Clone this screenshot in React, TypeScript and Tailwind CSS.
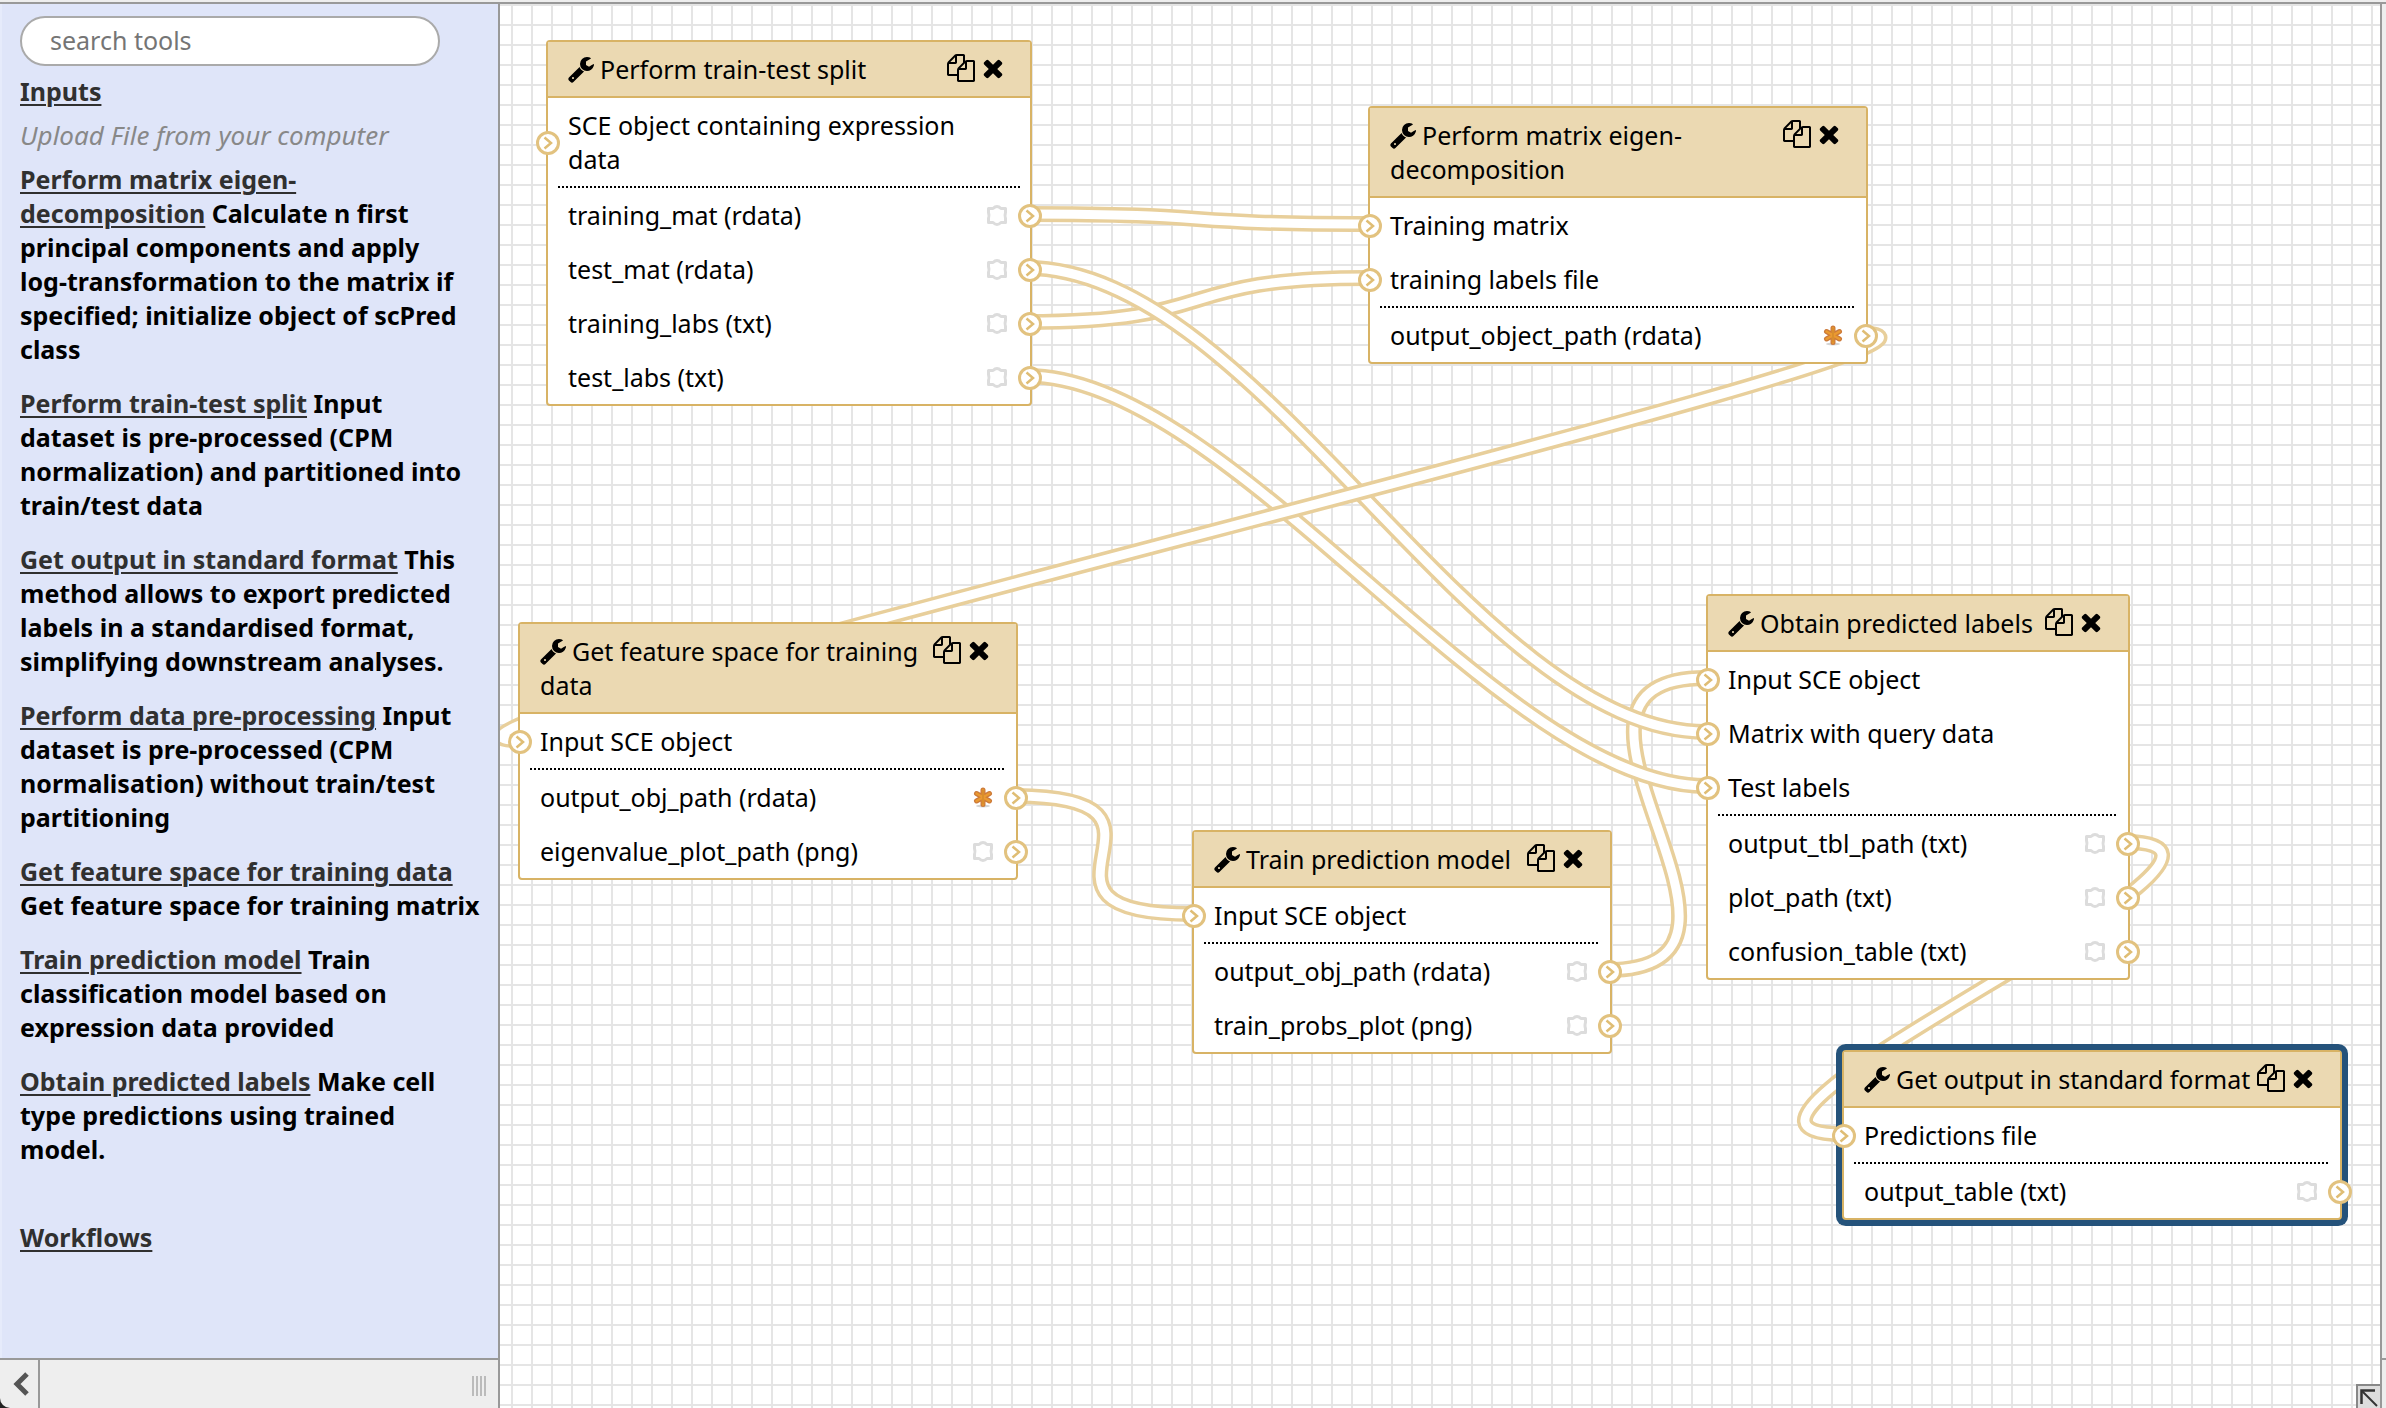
import type { ReactNode } from "react";

/**
 * Workflow editor — tool panel on the left, node canvas on the right.
 */

type Output = { label: string; starred?: boolean };

type WorkflowNode = {
  title: string;
  // place and width on the canvas
  box: string;
  inputs: string[];
  outputs: Output[];
  active?: boolean;
};

type Tool = { name: string; description: ReactNode };

type Point = [number, number];

const TOOLS: Tool[] = [
  {
    name: "Perform matrix eigen-decomposition",
    description: (
      <>
        Calculate n first principal components and apply{" "}
        <span className="whitespace-nowrap">log-transformation</span> to the matrix if specified;
        initialize object of scPred class
      </>
    ),
  },
  {
    name: "Perform train-test split",
    description:
      "Input dataset is pre-processed (CPM normalization) and partitioned into train/test data",
  },
  {
    name: "Get output in standard format",
    description:
      "This method allows to export predicted labels in a standardised format, simplifying downstream analyses.",
  },
  {
    name: "Perform data pre-processing",
    description:
      "Input dataset is pre-processed (CPM normalisation) without train/test partitioning",
  },
  {
    name: "Get feature space for training data",
    description: "Get feature space for training matrix",
  },
  {
    name: "Train prediction model",
    description: "Train classification model based on expression data provided",
  },
  {
    name: "Obtain predicted labels",
    description: "Make cell type predictions using trained model.",
  },
];

const NODES: WorkflowNode[] = [
  {
    title: "Perform train-test split",
    box: "left-[46px] top-[36px] w-[486px]",
    inputs: ["SCE object containing expression data"],
    outputs: [
      { label: "training_mat (rdata)" },
      { label: "test_mat (rdata)" },
      { label: "training_labs (txt)" },
      { label: "test_labs (txt)" },
    ],
  },
  {
    title: "Perform matrix eigen-decomposition",
    box: "left-[868px] top-[102px] w-[500px]",
    inputs: ["Training matrix", "training labels file"],
    outputs: [{ label: "output_object_path (rdata)", starred: true }],
  },
  {
    title: "Get feature space for training data",
    box: "left-[18px] top-[618px] w-[500px]",
    inputs: ["Input SCE object"],
    outputs: [
      { label: "output_obj_path (rdata)", starred: true },
      { label: "eigenvalue_plot_path (png)" },
    ],
  },
  {
    title: "Train prediction model",
    box: "left-[692px] top-[826px] w-[420px]",
    inputs: ["Input SCE object"],
    outputs: [
      { label: "output_obj_path (rdata)" },
      { label: "train_probs_plot (png)" },
    ],
  },
  {
    title: "Obtain predicted labels",
    box: "left-[1206px] top-[590px] w-[424px]",
    inputs: ["Input SCE object", "Matrix with query data", "Test labels"],
    outputs: [
      { label: "output_tbl_path (txt)" },
      { label: "plot_path (txt)" },
      { label: "confusion_table (txt)" },
    ],
  },
  {
    title: "Get output in standard format",
    box: "left-[1342px] top-[1046px] w-[500px]",
    inputs: ["Predictions file"],
    outputs: [{ label: "output_table (txt)" }],
    active: true,
  },
];

// [output port, input port] in canvas coordinates
const CONNECTIONS: [Point, Point][] = [
  [[1107, 966], [1206, 674]],
  [[527, 210], [868, 220]],
  [[527, 318], [868, 274]],
  [[527, 264], [1206, 728]],
  [[527, 372], [1206, 782]],
  [[1363, 330], [18, 736]],
  [[513, 792], [692, 910]],
  [[1625, 838], [1342, 1130]],
];

function wirePath([[x1, y1], [x2, y2]]: [Point, Point]) {
  const shift = Math.min(Math.max(Math.abs(y2 - y1) / 2, 200), 600);
  return `M${x1} ${y1}C${x1 + shift} ${y1} ${x2 - shift} ${y2} ${x2} ${y2}`;
}

export default function App() {
  return (
    <div className="flex h-screen flex-col bg-[#eeeeee] font-['Noto_Sans','Open_Sans',sans-serif] text-[25px] leading-[34px] text-black">
      <div className="h-1 shrink-0 border-b-2 border-[#999999]" />
      <div className="flex min-h-0 flex-1">
        <ToolPanel />
        <Canvas />
        <div className="flex w-[6px] shrink-0 flex-col justify-end border-l-2 border-[#999999]">
          <div className="h-[50px] border-t-2 border-[#999999]" />
        </div>
      </div>
    </div>
  );
}

function ToolPanel() {
  return (
    <aside className="flex w-[500px] shrink-0 flex-col border-r-2 border-[#999999] bg-[#dfe5f9]">
      <div className="min-h-0 flex-1 overflow-hidden border-l-2 border-[#e6ebfb] pt-3 pr-[18px] pl-[18px]">
        <input
          type="text"
          aria-label="search tools"
          placeholder="search tools"
          className="block h-[50px] w-[420px] rounded-[25px] border-2 border-[#aaaaaa] bg-white pr-4 pb-[2px] pl-7 outline-none placeholder:text-[#757575]"
        />
        <h2 className="mt-2 font-bold">
          <ToolLink>Inputs</ToolLink>
        </h2>
        <p className="mt-2.5 text-[26px] text-[#888888] italic">Upload File from your computer</p>
        <ul className="mt-2.5 flex flex-col gap-5 font-bold">
          {TOOLS.map((tool) => (
            <li key={tool.name}>
              <ToolLink>{tool.name}</ToolLink> {tool.description}
            </li>
          ))}
        </ul>
        <h2 className="mt-[54px] font-bold">
          <ToolLink>Workflows</ToolLink>
        </h2>
      </div>
      <div className="bg-[#222222]">
        <div className="flex h-[50px] items-stretch rounded-bl-[10px] border-t-2 border-[#999999] bg-[#eeeeee]">
          <button
            type="button"
            aria-label="Collapse panel"
            className="flex w-10 items-center justify-center border-r-2 border-[#999999]"
          >
            <svg aria-hidden viewBox="0 0 16 24" className="h-6 w-4 overflow-visible">
              <path d="M16 2L6 12l10 10" fill="none" stroke="#555555" strokeWidth="5" />
            </svg>
          </button>
          <div className="flex flex-1 items-center justify-end gap-[2px] pt-1 pr-3">
            {[0, 1, 2, 3].map((i) => (
              <span key={i} className="h-5 w-[2px] bg-[#bbbbbb]" />
            ))}
          </div>
        </div>
      </div>
    </aside>
  );
}

function ToolLink({ children }: { children: string }) {
  return (
    <a href="#" className="text-[#303030] underline decoration-2 underline-offset-[3px]">
      {children}
    </a>
  );
}

function Canvas() {
  return (
    <main className="relative min-w-0 flex-1 overflow-hidden bg-white bg-[linear-gradient(to_right,#e5e5e5_2px,transparent_2px),linear-gradient(to_bottom,#e5e5e5_2px,transparent_2px)] bg-size-[20px_20px] bg-position-[11px_0px]">
      <svg aria-hidden className="absolute inset-0 size-full" fill="none">
        {CONNECTIONS.map((c) => (
          <g key={wirePath(c)}>
            <path d={wirePath(c)} stroke="#e8cf9b" strokeWidth="16" />
            <path d={wirePath(c)} stroke="#ffffff" strokeWidth="9" />
          </g>
        ))}
      </svg>
      {NODES.map((node) => (
        <NodeCard key={node.title} node={node} />
      ))}
      <button
        type="button"
        aria-label="Toggle overview"
        className="absolute right-0 bottom-0 h-6 w-6 border-t-2 border-l-2 border-[#888888] bg-[#dddddd]"
      >
        <svg aria-hidden viewBox="0 0 22 22" className="size-[22px]" fill="none" stroke="#333333">
          <path d="M3.500 18V4.500H17" strokeWidth="2.500" />
          <path d="M4 5l15 15" strokeWidth="2" />
        </svg>
      </button>
    </main>
  );
}

function NodeCard({ node }: { node: WorkflowNode }) {
  return (
    <section
      aria-label={node.title}
      className={`absolute rounded-[4px] border-2 border-[#d8b365] bg-white ${node.box} ${
        node.active ? "ring-6 ring-[#25537b]" : ""
      }`}
    >
      <header className="flex items-start border-b-2 border-[#d8b365] bg-[#ebd9b2] py-2.5 pr-[26px] pl-5">
        <h3 className="min-w-0 flex-1">
          <WrenchIcon />
          {node.title}
        </h3>
        <div className="flex h-8 shrink-0 items-center gap-[7px]">
          <button type="button" aria-label={`Duplicate ${node.title}`}>
            <FilesIcon />
          </button>
          <button type="button" aria-label={`Remove ${node.title}`}>
            <TimesIcon />
          </button>
        </div>
      </header>
      <ul>
        {node.inputs.map((label) => (
          <li key={label} className="relative px-5 py-2.5">
            <Port className="-left-3" />
            {label}
          </li>
        ))}
      </ul>
      <div className="mx-2.5 h-[2px] bg-[repeating-linear-gradient(to_right,#000000_0px_2px,transparent_2px_4px)]" />
      <ul>
        {node.outputs.map((output) => (
          <li
            key={output.label}
            className="relative flex items-center justify-between py-2.5 pr-[22px] pl-5"
          >
            {output.label}
            {output.starred ? <StarIcon /> : <UnstarredIcon />}
            <Port className="-right-3" />
          </li>
        ))}
      </ul>
    </section>
  );
}

function Port({ className }: { className: string }) {
  return (
    <svg
      aria-hidden
      viewBox="0 0 24 24"
      fill="none"
      className={`absolute top-1/2 -mt-[11px] size-6 ${className}`}
    >
      <circle cx="12" cy="12" r="10.500" fill="#ffffff" stroke="#e2c27f" strokeWidth="3" />
      <path d="M8.500 6.500L15 12l-6.500 5.500" stroke="#dfbd74" strokeWidth="2.500" />
    </svg>
  );
}

function WrenchIcon() {
  return (
    <svg
      aria-hidden
      viewBox="64 0 1664 1792"
      fill="currentColor"
      className="mr-[6px] inline-block h-7 w-[26px] align-[-4px]"
    >
      <path d="M448 1472q0-26-19-45t-45-19-45 19-19 45 19 45 45 19 45-19 19-45zm644-420l-682 682q-37 37-90 37-52 0-91-37l-106-108q-38-36-38-90 0-53 38-91l681-681q39 98 114.500 173.500t173.500 114.500zm634-435q0 39-23 106-47 134-164.500 217.500t-258.500 83.500q-185 0-316.500-131.500t-131.500-316.500 131.500-316.500 316.500-131.500q58 0 121.500 16.500t107.500 46.500q16 11 16 28t-16 28l-293 169v224l193 107q5-3 79-48.500t135.500-81 70.500-35.500q15 0 23.500 10t8.500 25z" />
    </svg>
  );
}

function FilesIcon() {
  return (
    <svg aria-hidden viewBox="0 0 1792 1792" fill="currentColor" className="size-7">
      <path d="M1696 384q40 0 68 28t28 68v1216q0 40-28 68t-68 28h-960q-40 0-68-28t-28-68v-288h-544q-40 0-68-28t-28-68v-672q0-40 20-88t48-76l408-408q28-28 76-48t88-20h416q40 0 68 28t28 68v328q68-40 128-40h416zm-544 213l-299 299h299v-299zm-640-384l-299 299h299v-299zm196 647l316-316v-416h-384v416q0 40-28 68t-68 28h-416v640h512v-256q0-40 20-88t48-76zm956 804v-1152h-384v416q0 40-28 68t-68 28h-416v640h896z" />
    </svg>
  );
}

function TimesIcon() {
  return (
    <svg aria-hidden viewBox="192 0 1408 1792" fill="currentColor" className="h-7 w-[22px]">
      <path d="M1490 1322q0 40-28 68l-136 136q-28 28-68 28t-68-28l-294-294-294 294q-28 28-68 28t-68-28l-136-136q-28-28-28-68t28-68l294-294-294-294q-28-28-28-68t28-68l136-136q28-28 68-28t68 28l294 294 294-294q28-28 68-28t68 28l136 136q28 28 28 68t-28 68l-294 294 294 294q28 28 28 68z" />
    </svg>
  );
}

function StarIcon() {
  return (
    <svg aria-hidden viewBox="0 0 22 22" className="size-[22px]" fill="none" strokeLinecap="round">
      <ellipse cx="11" cy="20" rx="7" ry="1.500" fill="#d4d4d4" />
      <path d="M11 4v14.500M4.500 7.500l13 7.500M17.500 7.500l-13 7.500" stroke="#cc7a3a" strokeWidth="5" />
      <path d="M11 4v14.500M4.500 7.500l13 7.500M17.500 7.500l-13 7.500" stroke="#ea9a30" strokeWidth="2.500" />
      <path d="M11 4v14" stroke="#c98228" strokeWidth="1" />
    </svg>
  );
}

function UnstarredIcon() {
  return (
    <svg aria-hidden viewBox="0 0 22 22" className="size-[22px]" fill="none">
      <path
        d="M2.500 4.500Q5 4.500 7 4.500Q9 2.500 11 2.500Q13 2.500 15 4.500Q17 4.500 19.500 4.500V8.500Q18.500 11.500 19.500 14.500V18.500H15Q13 20.500 11 20.500Q9 20.500 7 18.500H2.500V14.500Q3.500 11.500 2.500 8.500Z"
        stroke="#dcdcdc"
        strokeWidth="3"
        strokeLinejoin="round"
      />
    </svg>
  );
}
